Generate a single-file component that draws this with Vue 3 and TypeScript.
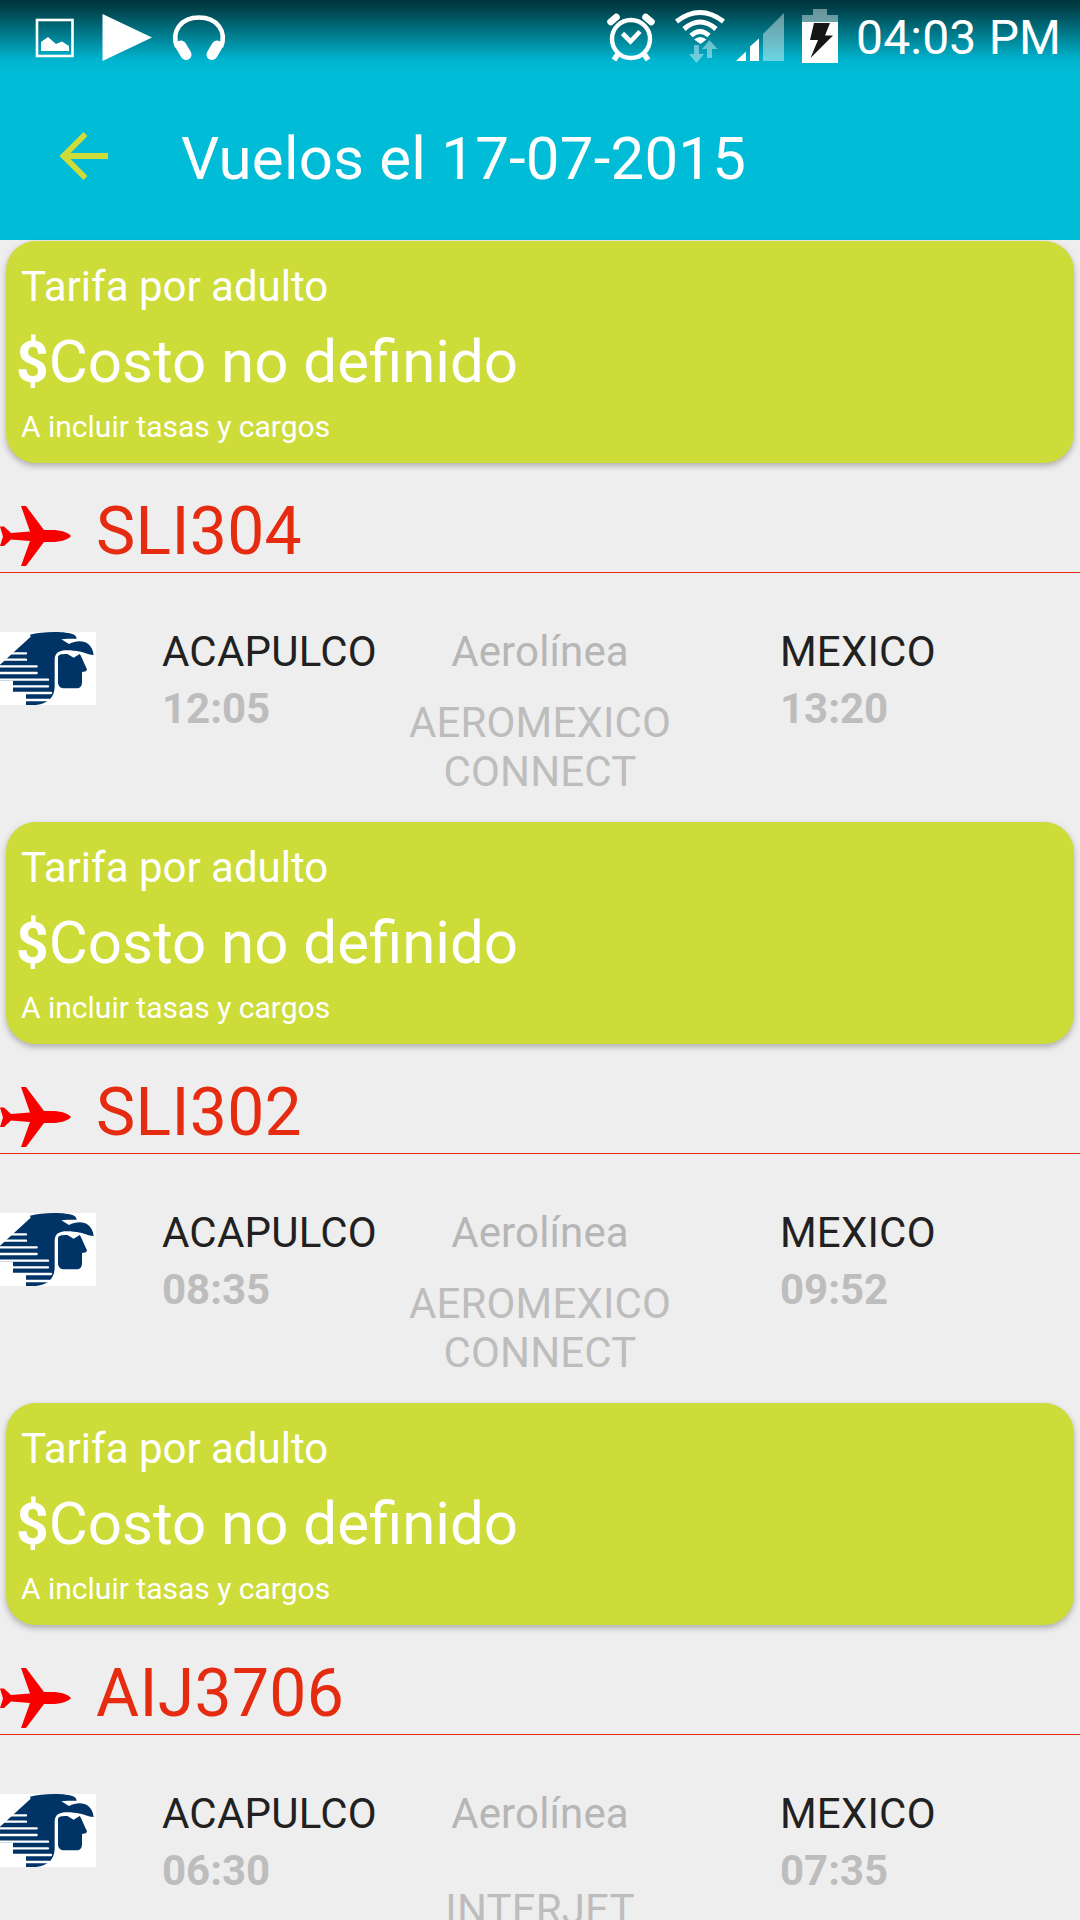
<script setup lang="ts">
interface Flight {
  code: string
  from: string
  departs: string
  to: string
  arrives: string
  airline: string
}

const date = '17-07-2015'

const flights: Flight[] = [
  { code: 'SLI304', from: 'ACAPULCO', departs: '12:05', to: 'MEXICO', arrives: '13:20', airline: 'AEROMEXICO CONNECT' },
  { code: 'SLI302', from: 'ACAPULCO', departs: '08:35', to: 'MEXICO', arrives: '09:52', airline: 'AEROMEXICO CONNECT' },
  { code: 'AIJ3706', from: 'ACAPULCO', departs: '06:30', to: 'MEXICO', arrives: '07:35', airline: 'INTERJET' },
]
</script>

<template>
  <div class="screen">
    <header class="top">
      <div class="status">
        <svg class="status-left" width="240" height="72" viewBox="0 0 240 72" fill="#fff">
          <rect x="37" y="20" width="35.5" height="36" fill="none" stroke="#fff" stroke-width="2.6" />
          <path d="M41 51V42L48 37L56 44L62 41.500L69 46V51Z" />
          <path d="M102.500 14V61L152 37.500Z" />
          <path d="M177 47C171 31 181 17.500 199 17.500S227 31 221 47" fill="none" stroke="#fff" stroke-width="4.600" />
          <path d="M181 46L186 54.500M217 46L212 54.500" fill="none" stroke="#fff" stroke-width="11" stroke-linecap="round" />
        </svg>
        <svg class="status-right" width="250" height="72" viewBox="600 0 250 72" fill="#fff">
          <circle cx="631" cy="39" r="19" fill="none" stroke="#fff" stroke-width="4.400" />
          <path d="M609.500 23L617.500 16M652.500 23L644.500 16" fill="none" stroke="#fff" stroke-width="6.500" />
          <path d="M610.500 22L616.500 17M651.500 22L645.500 17" fill="none" stroke="#fff" stroke-width="6.500" stroke-linecap="round" />
          <path d="M618.500 53L614 60M643.500 53L648 60" fill="none" stroke="#fff" stroke-width="5.500" />
          <path d="M622.500 33.500L630.500 41.500L640 31.500" fill="none" stroke="#fff" stroke-width="4.600" />
          <path d="M676.500 21.500Q700 3.500 723.500 21.500M684 29Q700 15 716 29M691 35.500Q700 27.500 709 35.500" fill="none" stroke="#fff" stroke-width="5" />
          <path d="M694 39.500Q700 34.500 706.500 39.500L700.500 44Z" />
          <g fill-opacity=".42">
            <path d="M694 45H699V54H704L696.500 63L689 54H694Z" />
            <path d="M707 58V49H702L709.500 40L717.500 49H712V58Z" />
            <path d="M763 61V34L784 13V61Z" />
            <path d="M802 22V15H813V9H827V15H838V22Z" />
          </g>
          <path d="M736 61L746 51.500V61ZM750 61V46.500L759 38.500V61Z" />
          <rect x="802" y="22" width="36" height="41" />
          <path d="M814 23H830L825 35.500H833L810.500 58L818 40H810Z" fill="#151515" />
        </svg>
        <span class="clock">04:03 PM</span>
      </div>
      <div class="toolbar">
        <svg class="back" width="50" height="50" viewBox="0 0 50 50" fill="none" stroke="#cddc39" stroke-width="5.800">
          <path d="M49 25H5M26.500 3L4.500 25L26.500 47" />
        </svg>
        <h1>Vuelos el {{ date }}</h1>
      </div>
    </header>

    <main>
      <section v-for="flight in flights" :key="flight.code" class="flight">
        <div class="fare">
          <p class="fare-label">Tarifa por adulto</p>
          <p class="fare-price"><b>$</b>Costo no definido</p>
          <p class="fare-note">A incluir tasas y cargos</p>
        </div>

        <div class="heading">
          <svg class="plane" width="72" height="61" viewBox="0 0 72 61">
            <path fill="#f80000" d="M21 0H26L44 24H54C62 24.500 69 27 71 30C69 33 62 35.500 54 36H44L26 60H21L30 35L11 33.500L4 40H0L3 30.500L0 20.500H4L11 27L30 25.500Z" />
          </svg>
          <h2>{{ flight.code }}</h2>
        </div>

        <div class="details">
          <svg class="logo" width="96" height="73" viewBox="0 0 288 219">
            <path fill="#fff" d="M0 0H288V219H0Z" />
            <g fill="#003366">
              <path d="M90 8C130-2 195-3 219 7Q229 11 230 20C218 22 201 18 184 22L207 36C240 20 276 27 281 69C260 67 246 57 221 56C183 52 165 58 164 82V165C163 195 145 215 108 219H78V186H39V146H0V98L92 14Z" />
              <path d="M174 77C174 68 181 66 202 66L221 77L239 66C244 72 248 84 261 112L258 118L246 120V150C246 163 240 169 229 169H194C181 169 174 162 174 150Z" />
            </g>
            <path fill="none" stroke="#fff" stroke-width="7" stroke-linecap="round" d="M30 64H78M10 83H78M0 103H110M0 123H110M0 143H144M39 163H144M39 183H153M78 204H147" />
          </svg>
          <div class="place origin">
            <p>{{ flight.from }}</p>
            <b>{{ flight.departs }}</b>
          </div>
          <div class="airline">
            <p class="airline-label">Aerolínea</p>
            <p class="airline-name"><span>{{ flight.airline }}</span></p>
          </div>
          <div class="place">
            <p>{{ flight.to }}</p>
            <b>{{ flight.arrives }}</b>
          </div>
        </div>
      </section>
    </main>
  </div>
</template>

<style>
body {
  background: #eee;
}
</style>

<style scoped>
.screen {
  width: 1080px;
  height: 1920px;
  overflow: hidden;
  background: #eee;
  font-family: Roboto, sans-serif;
  color: #212121;
}

h1,
h2,
p {
  margin: 0;
  font-weight: 400;
}

.top {
  height: 240px;
  background: linear-gradient(#00363d 0, #003e46 7px, #00b4ce 60px, #00bcd7 76px);
  color: #fff;
}

.status {
  display: flex;
  height: 75px;
}

.status-right {
  margin-left: 360px;
}

.clock {
  margin: 10px 0 0 6px;
  font-size: 48px;
  line-height: 56px;
  letter-spacing: 0.2px;
  white-space: nowrap;
}

.toolbar {
  display: flex;
  height: 165px;
}

.back {
  margin: 56px 0 0 59px;
}

h1 {
  margin: 49px 0 0 72px;
  font-size: 60px;
  line-height: 70px;
  letter-spacing: 0.2px;
}

.flight {
  height: 581px;
  padding-top: 1px;
  box-sizing: border-box;
}

.fare {
  box-sizing: border-box;
  height: 222px;
  margin: 0 6px;
  padding: 21px 0 0 10px;
  border-radius: 30px;
  background: #cddc39;
  box-shadow: 0 3px 6px rgba(0, 0, 0, 0.27);
  color: #fff;
}

.fare-label {
  padding-left: 5px;
  font-size: 42px;
  line-height: 49px;
}

.fare-price {
  margin-top: 16px;
  font-size: 60px;
  line-height: 70px;
}

.fare-price b {
  font-size: 57px;
  line-height: 1;
}

.fare-note {
  margin-top: 12px;
  padding-left: 5px;
  font-size: 30px;
  line-height: 35px;
}

.heading {
  display: flex;
  box-sizing: border-box;
  height: 110px;
  border-bottom: 1px solid #e52b10;
}

.plane {
  margin-top: 43px;
}

h2 {
  margin: 30px 0 0 24px;
  color: #e52b10;
  font-size: 66px;
  line-height: 77px;
  letter-spacing: 0.35px;
}

.details {
  display: flex;
  padding-top: 54px;
  font-size: 42px;
  line-height: 49px;
}

.logo {
  margin-top: 5px;
}

.place p {
  letter-spacing: 0.2px;
}

.place b {
  display: block;
  margin-top: 8px;
  color: #bdbdbd;
}

.origin {
  width: 238px;
  margin-left: 66px;
}

.airline {
  width: 280px;
  margin-right: 100px;
  text-align: center;
  letter-spacing: 0.15px;
}

.airline-label {
  color: #b6b6b6;
}

.airline-name {
  display: flex;
  align-items: center;
  justify-content: center;
  height: 98px;
  margin-top: 22px;
  color: #bdbdbd;
}
</style>
